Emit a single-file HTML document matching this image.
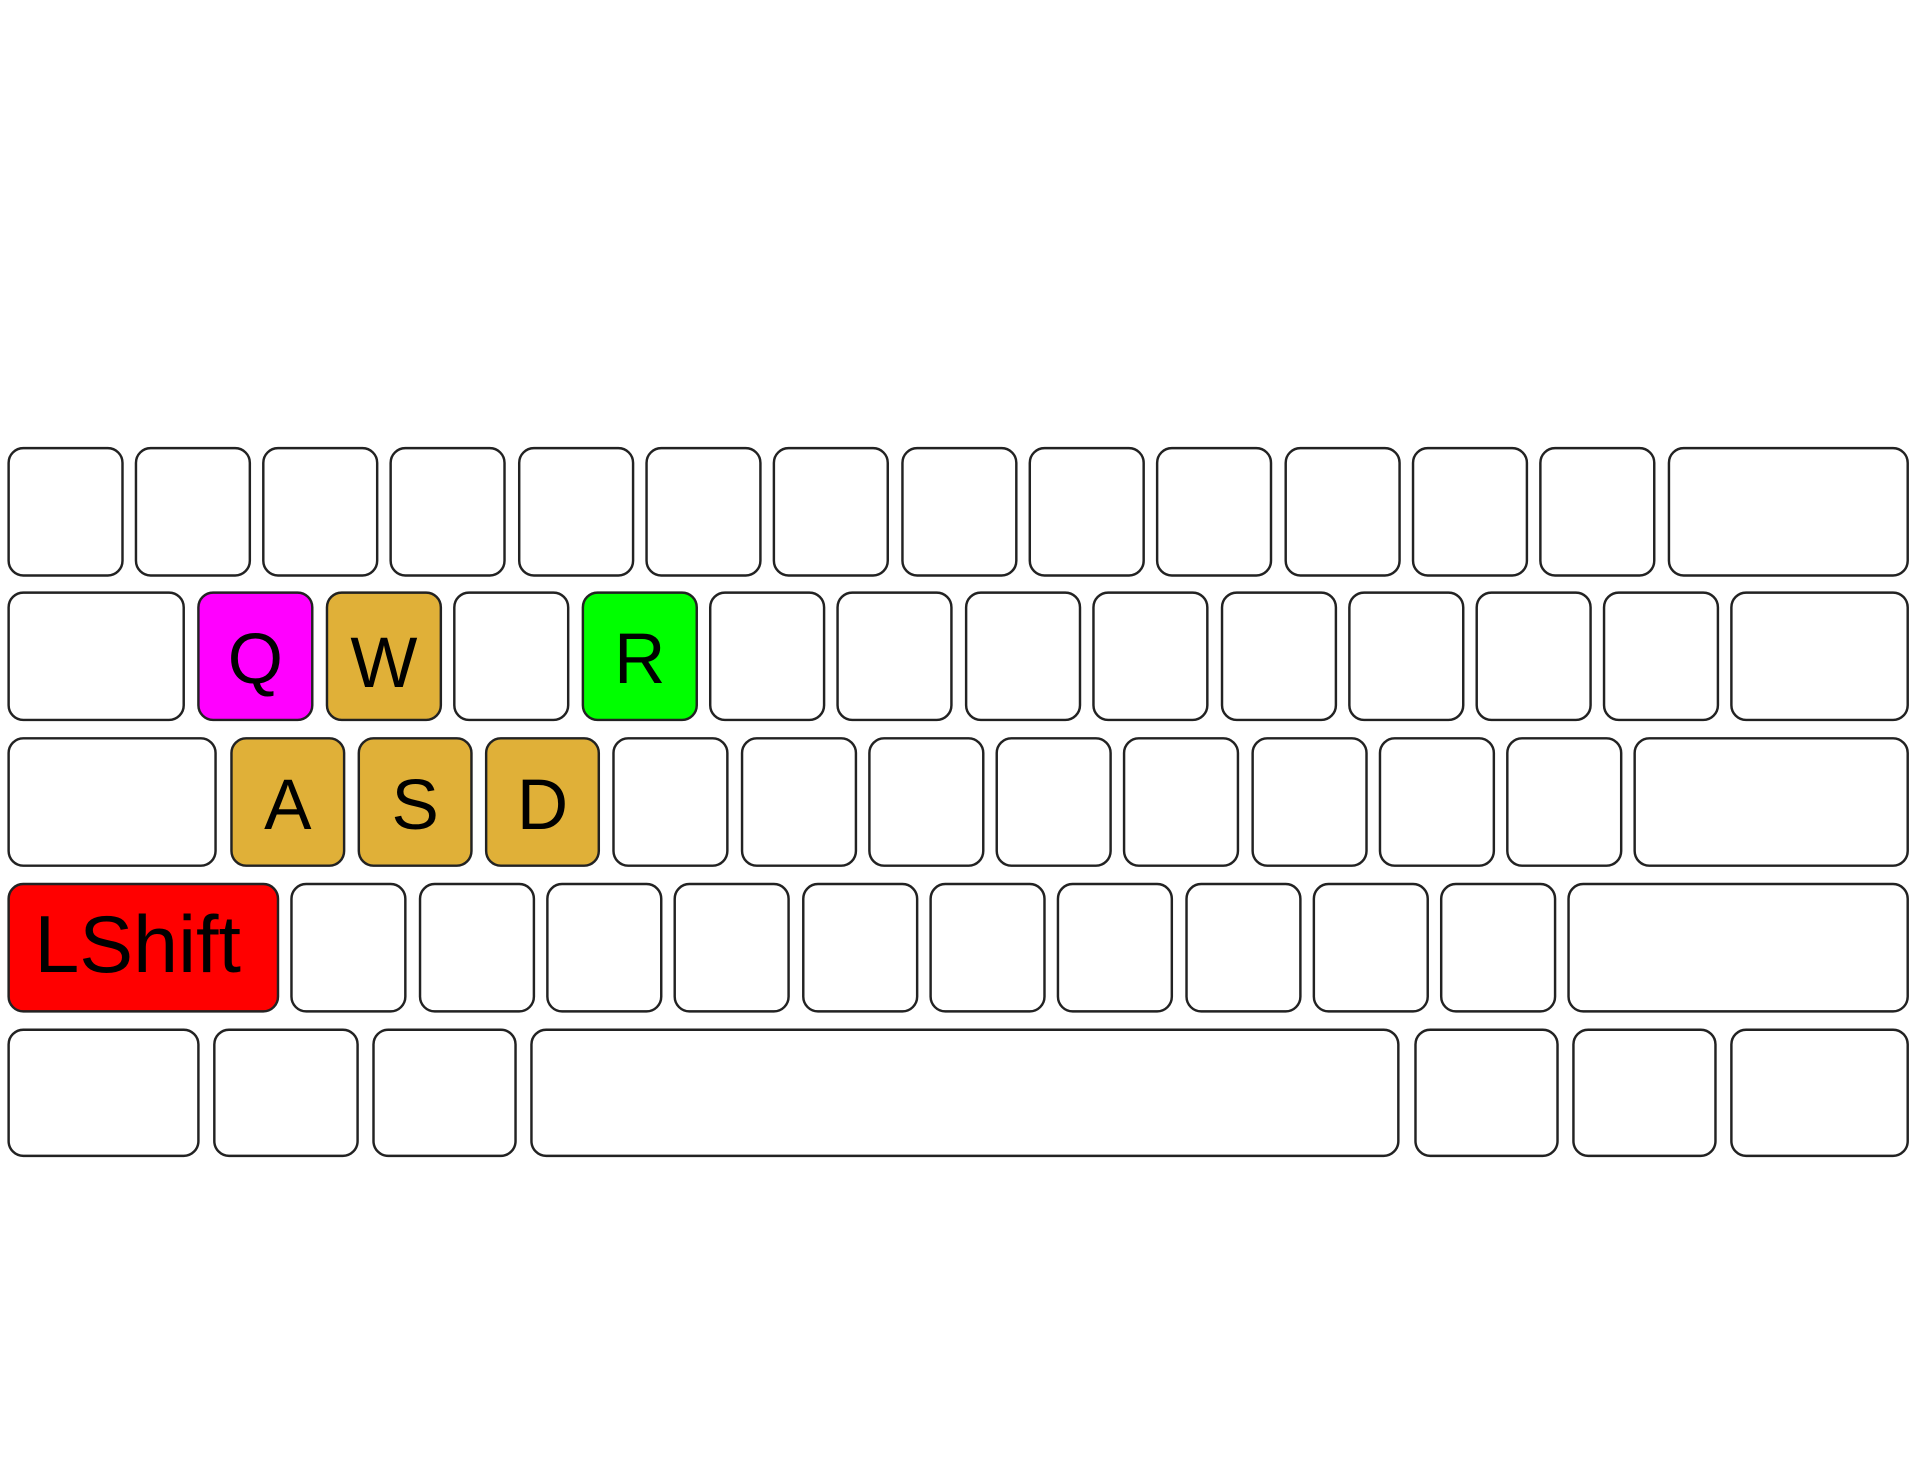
<!DOCTYPE html>
<html><head><meta charset="utf-8"><style>
html,body{margin:0;padding:0;background:#fff;}
svg{display:block;}
text{font-family:"Liberation Sans",sans-serif;fill:#000;}
</style></head><body>
<svg width="1920" height="1484" viewBox="0 0 1568 1212" xmlns="http://www.w3.org/2000/svg">
<g fill="#fff" stroke="#222" stroke-width="2">
<rect x="7" y="366" width="93" height="104" rx="12"/>
<rect x="111" y="366" width="93" height="104" rx="12"/>
<rect x="215" y="366" width="93" height="104" rx="12"/>
<rect x="319" y="366" width="93" height="104" rx="12"/>
<rect x="424" y="366" width="93" height="104" rx="12"/>
<rect x="528" y="366" width="93" height="104" rx="12"/>
<rect x="632" y="366" width="93" height="104" rx="12"/>
<rect x="737" y="366" width="93" height="104" rx="12"/>
<rect x="841" y="366" width="93" height="104" rx="12"/>
<rect x="945" y="366" width="93" height="104" rx="12"/>
<rect x="1050" y="366" width="93" height="104" rx="12"/>
<rect x="1154" y="366" width="93" height="104" rx="12"/>
<rect x="1258" y="366" width="93" height="104" rx="12"/>
<rect x="1363" y="366" width="195" height="104" rx="12"/>
<rect x="7" y="484" width="143" height="104" rx="12"/>
<rect x="162" y="484" width="93" height="104" rx="12" fill="#ff00ff"/>
<rect x="267" y="484" width="93" height="104" rx="12" fill="#e0b038"/>
<rect x="371" y="484" width="93" height="104" rx="12"/>
<rect x="476" y="484" width="93" height="104" rx="12" fill="#00ff00"/>
<rect x="580" y="484" width="93" height="104" rx="12"/>
<rect x="684" y="484" width="93" height="104" rx="12"/>
<rect x="789" y="484" width="93" height="104" rx="12"/>
<rect x="893" y="484" width="93" height="104" rx="12"/>
<rect x="998" y="484" width="93" height="104" rx="12"/>
<rect x="1102" y="484" width="93" height="104" rx="12"/>
<rect x="1206" y="484" width="93" height="104" rx="12"/>
<rect x="1310" y="484" width="93" height="104" rx="12"/>
<rect x="1414" y="484" width="144" height="104" rx="12"/>
<rect x="7" y="603" width="169" height="104" rx="12"/>
<rect x="189" y="603" width="92" height="104" rx="12" fill="#e0b038"/>
<rect x="293" y="603" width="92" height="104" rx="12" fill="#e0b038"/>
<rect x="397" y="603" width="92" height="104" rx="12" fill="#e0b038"/>
<rect x="501" y="603" width="93" height="104" rx="12"/>
<rect x="606" y="603" width="93" height="104" rx="12"/>
<rect x="710" y="603" width="93" height="104" rx="12"/>
<rect x="814" y="603" width="93" height="104" rx="12"/>
<rect x="918" y="603" width="93" height="104" rx="12"/>
<rect x="1023" y="603" width="93" height="104" rx="12"/>
<rect x="1127" y="603" width="93" height="104" rx="12"/>
<rect x="1231" y="603" width="93" height="104" rx="12"/>
<rect x="1335" y="603" width="223" height="104" rx="12"/>
<rect x="7" y="722" width="220" height="104" rx="12" fill="#ff0000"/>
<rect x="238" y="722" width="93" height="104" rx="12"/>
<rect x="343" y="722" width="93" height="104" rx="12"/>
<rect x="447" y="722" width="93" height="104" rx="12"/>
<rect x="551" y="722" width="93" height="104" rx="12"/>
<rect x="656" y="722" width="93" height="104" rx="12"/>
<rect x="760" y="722" width="93" height="104" rx="12"/>
<rect x="864" y="722" width="93" height="104" rx="12"/>
<rect x="969" y="722" width="93" height="104" rx="12"/>
<rect x="1073" y="722" width="93" height="104" rx="12"/>
<rect x="1177" y="722" width="93" height="104" rx="12"/>
<rect x="1281" y="722" width="277" height="104" rx="12"/>
<rect x="7" y="841" width="155" height="103" rx="12"/>
<rect x="175" y="841" width="117" height="103" rx="12"/>
<rect x="305" y="841" width="116" height="103" rx="12"/>
<rect x="434" y="841" width="708" height="103" rx="12"/>
<rect x="1156" y="841" width="116" height="103" rx="12"/>
<rect x="1285" y="841" width="116" height="103" rx="12"/>
<rect x="1414" y="841" width="144" height="103" rx="12"/>
</g>
<g font-size="58" text-anchor="middle">
<text x="208.5" y="558">Q</text>
<text x="313.5" y="561">W</text>
<text x="522.5" y="558">R</text>
<text x="235" y="677">A</text>
<text x="339" y="677">S</text>
<text x="443" y="677">D</text>
</g>
<text x="28" y="794" font-size="66">LShift</text>
</svg>
</body></html>
